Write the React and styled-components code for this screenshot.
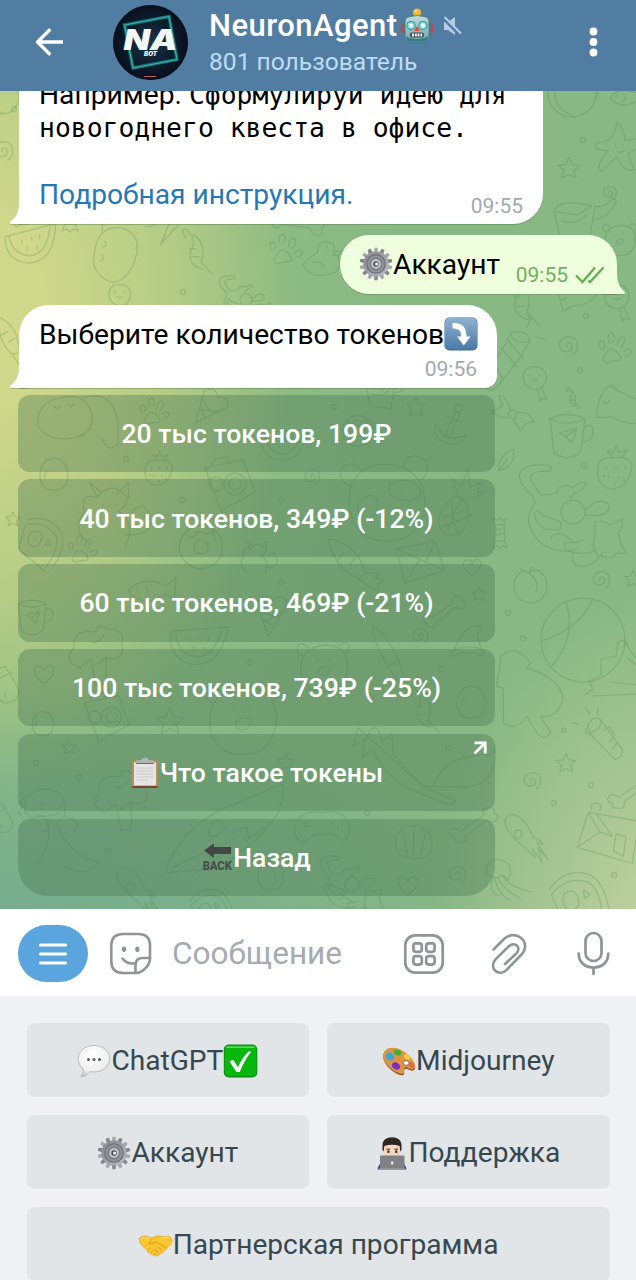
import React from 'react';
import styled, { createGlobalStyle } from 'styled-components';

const GlobalStyle = createGlobalStyle`
  * { box-sizing: border-box; }
  html, body { margin: 0; padding: 0; }
  body { font-family: Roboto, "Noto Sans", sans-serif; background: #eff1f5; overflow: hidden; }
  button { font: inherit; border: 0; padding: 0; margin: 0; background: none; color: inherit; }
  svg { display: block; flex: none; }
`;

const Screen = styled.div`
  width: 636px;
  height: 1280px;
  display: flex;
  flex-direction: column;
  overflow: hidden;
`;

/* ---------- header ---------- */
const Header = styled.header`
  height: 91px;
  flex: none;
  display: flex;
  align-items: flex-start;
  padding: 0 38px 0 34px;
  background: #527da3;
  color: #fff;
`;
const BackButton = styled.button`
  margin: 27px 49px 0 0;
`;
const Avatar = styled.div`
  width: 75px;
  height: 75px;
  margin: 5px 21px 0 0;
  border-radius: 50%;
  overflow: hidden;
  background: #0a1523;
`;
const Heading = styled.div`
  flex: 1;
  padding-top: 8px;
`;
const TitleRow = styled.div`
  display: flex;
  align-items: center;
  height: 36px;
`;
const Title = styled.h1`
  margin: 0 2px 0 0;
  font-size: 31px;
  line-height: 36px;
  font-weight: 500;
  letter-spacing: 0.45px;
  white-space: nowrap;
`;
const MuteIcon = styled.svg`
  margin-left: 9px;
`;
const Subtitle = styled.div`
  font-size: 24.6px;
  line-height: 36px;
  color: #bfdcf5;
  white-space: nowrap;
`;
const MenuDots = styled.button`
  margin-top: 27px;
`;

/* ---------- chat ---------- */
const Chat = styled.main`
  position: relative;
  height: 818px;
  flex: none;
  display: flex;
  flex-direction: column;
  justify-content: flex-end;
  padding: 0 19px 13px 18px;
  overflow: hidden;
  background:
    radial-gradient(ellipse 230px 350px at 104% 104%, rgba(202, 214, 165, 0.9), rgba(202, 214, 165, 0) 100%),
    radial-gradient(ellipse 520px 270px at 0% 106%, rgba(116, 171, 143, 1) 5%, rgba(116, 171, 143, 0) 100%),
    radial-gradient(ellipse 420px 640px at -3% 27%, #d0d88b 14%, rgba(192, 209, 134, 0.8) 45%, rgba(150, 192, 133, 0.3) 75%, rgba(136, 184, 132, 0) 100%),
    #88b884;
`;
const Wallpaper = styled.svg`
  position: absolute;
  inset: 0;
`;
const Bubble = styled.article`
  position: relative;
  flex: none;
  display: flex;
  flex-direction: column;
  width: ${(p) => p.$width}px;
  height: ${(p) => p.$height}px;
  align-self: ${(p) => (p.$out ? 'flex-end' : 'flex-start')};
  margin: 0 0 ${(p) => p.$gap}px ${(p) => (p.$out ? 0 : 1)}px;
  padding: ${(p) => p.$pad};
  background: ${(p) => (p.$out ? '#effedd' : '#fff')};
  border-radius: ${(p) => p.$radius};
  box-shadow: 0 1px 0 rgba(80, 120, 70, 0.42);
  font-size: 28.2px;
  line-height: 33.3px;
  color: #000;
`;
const Tail = styled.svg`
  position: absolute;
  bottom: -1px;
  ${(p) => (p.$out ? 'right: -9px;' : 'left: -10px;')}
`;
const Line = styled.div`
  display: flex;
  align-items: center;
  height: 33.3px;
  white-space: pre;
`;
const Mono = styled.span`
  font-family: "DejaVu Sans Mono", monospace;
  font-size: 26.4px;
`;
const Link = styled.a`
  color: #2678b6;
`;
const Stamp = styled.time`
  display: flex;
  align-self: flex-end;
  align-items: center;
  gap: 7px;
  margin-top: ${(p) => p.$drop}px;
  font-size: 21px;
  line-height: 24px;
  color: ${(p) => (p.$out ? '#70b15c' : '#a1aab3')};
`;
const FootRow = styled.div`
  display: flex;
  justify-content: space-between;
  align-items: flex-start;
`;

const InlineButtons = styled.div`
  position: relative;
  width: 477px;
  display: flex;
  flex-direction: column;
  gap: 7.4px;
`;
const InlineButton = styled.button`
  height: 77.4px;
  display: flex;
  position: relative;
  align-items: center;
  justify-content: center;
  border-radius: ${(p) => (p.$last ? '12px 12px 30px 30px' : '12px')};
  background: rgba(70, 115, 80, 0.36);
  color: #fff;
  font-size: 26.6px;
  font-weight: 500;
  white-space: nowrap;
`;
const Corner = styled.span`
  position: absolute;
  top: 7px;
  right: 8px;
`;

/* ---------- composer ---------- */
const Composer = styled.section`
  height: 87px;
  flex: none;
  display: flex;
  align-items: center;
  padding: 2px 26px 0 18px;
  background: #fff;
`;
const CommandsButton = styled.button`
  width: 70px;
  height: 57px;
  margin-right: 21px;
  display: flex;
  align-items: center;
  justify-content: center;
  border-radius: 29px;
  background: #5ba5df;
`;
const Placeholder = styled.span`
  flex: 1;
  margin-left: 20px;
  font-size: 31.6px;
  line-height: 36px;
  color: #a4abb1;
`;
const Tools = styled.div`
  display: flex;
  align-items: center;
`;
const ToolButton = styled.button`
  margin-left: ${(p) => p.$gap || 0}px;
`;

/* ---------- reply keyboard ---------- */
const Keyboard = styled.section`
  flex: none;
  display: grid;
  grid-template-columns: 1fr 1fr;
  gap: 18px;
  padding: 27px 26.4px 0 26.6px;
  background: #eff1f5;
`;
const Key = styled.button`
  height: 74px;
  grid-column: span ${(p) => p.$span || 1};
  display: flex;
  align-items: center;
  justify-content: center;
  border-radius: 7px;
  background: #e2e5e8;
  box-shadow: 0 1px 0 #f4f6f8;
  color: #36474f;
  font-size: 28.1px;
  padding-top: 1px;
  white-space: nowrap;
`;

/* ---------- emoji ---------- */
const Robot = () => (
  <svg width="34" height="36" viewBox="0 0 34 36">
    <defs>
      <linearGradient id="rb" x1="0" y1="0" x2="0" y2="1"><stop offset="0" stopColor="#c3dddd" /><stop offset="1" stopColor="#6fa3ab" /></linearGradient>
    </defs>
    <rect x="0.8" y="16" width="5" height="9" rx="2" fill="#d9433c" />
    <rect x="28.2" y="16" width="5" height="9" rx="2" fill="#d9433c" />
    <rect x="2.8" y="14" width="3" height="13" fill="#50777f" />
    <rect x="28.2" y="14" width="3" height="13" fill="#50777f" />
    <path d="M14 6h6v5h-6z" fill="#538691" />
    <circle cx="17" cy="4.5" r="4" fill="#efb62f" /><circle cx="16" cy="3.3" r="1.3" fill="#ffe58a" />
    <path d="M8 9q9-3 18 0 3 1 3 5v14q0 6-6 6H11q-6 0-6-6V14q0-4 3-5z" fill="url(#rb)" stroke="#477780" strokeWidth=".8" />
    <path d="M6 28q0 5.500 5 5.500h12q5 0 5-5.500-3 3-11 3T6 28z" fill="#2f7e86" />
    <circle cx="11" cy="17.5" r="4.600" fill="#2f8f9b" /><circle cx="23" cy="17.5" r="4.600" fill="#2f8f9b" />
    <circle cx="11" cy="17.5" r="3.6" fill="#7fe2e2" /><circle cx="23" cy="17.5" r="3.6" fill="#7fe2e2" />
    <circle cx="11" cy="17.5" r="2" fill="#fff" /><circle cx="23" cy="17.5" r="2" fill="#fff" />
    <path d="M17 18l3 5h-6z" fill="#e24840" />
    <rect x="10" y="24.500" width="14" height="5" rx="2" fill="#3c4d50" />
    <path d="M12 25.500h2v3h-2zM15 25.500h1.800v3H15zM17.600 25.500h1.800v3h-1.800zM20.400 25.500h1.800v3h-1.800z" fill="#f3f7f5" />
  </svg>
);

const Gear = () => (
  <svg width="34" height="34" viewBox="-17 -17 34 34">
    <defs><linearGradient id="gr" x1="0" y1="0" x2="1" y2="1"><stop offset="0" stopColor="#85868c" /><stop offset="1" stopColor="#b9bbc2" /></linearGradient></defs>
    {Array.from({ length: 14 }, (_, i) => (
      <path key={i} d="M-2.4-10L-1.5-16.3 1.6-16.3 2.4-10z" transform={`rotate(${(i * 360) / 14})`} fill={i % 2 ? '#85868d' : '#a6a8af'} />
    ))}
    <circle r="12.6" fill="url(#gr)" /><circle r="9.800" fill="#66676f" /><circle r="8.800" fill="#92949b" />
    <circle r="6.500" fill="#777981" /><circle r="5" fill="#c0c2c8" /><circle r="2.700" fill="#4b4c54" /><circle cx=".600" r="1.600" fill="#f3f4f5" />
  </svg>
);

const ArrowBox = () => (
  <svg width="34" height="34" viewBox="0 0 34 34">
    <defs><linearGradient id="ab" x1="0" y1="0" x2="0" y2="1"><stop offset="0" stopColor="#8fb1cf" /><stop offset="1" stopColor="#4b7ba8" /></linearGradient></defs>
    <rect x=".5" y=".5" width="33" height="33" rx="5" fill="#3f6b94" />
    <rect x="1" y=".8" width="32" height="31.6" rx="5" fill="url(#ab)" />
    <path d="M8.500 6C17 5.500 22.600 9 22.600 19.500h3.900L19.800 28.500 13 19.500h4.200C17.200 13.500 14.500 11.500 8.500 11.500z" fill="#fff" />
  </svg>
);

const Clipboard = () => (
  <svg width="30" height="32" viewBox="0 0 30 32">
    <rect x="2.300" y="3.500" width="25.400" height="27.500" rx="1" fill="#c98a58" />
    <rect x="2.300" y="29" width="25.400" height="2" fill="#7d4328" />
    <rect x="4" y="5.500" width="22" height="23" fill="#e6e4e5" />
    <path d="M6.500 11h17M6.500 14h17M6.500 17h17M6.500 20h17M6.500 23h11" stroke="#cbc9cc" strokeWidth="1.100" />
    <path d="M6 6.500V4.500q0-1.500 5-1.500 1-2.500 4-2.500t4 2.500q5 0 5 1.500v2z" fill="#aeb3b4" />
    <path d="M6 6.500h18" stroke="#6d6f70" strokeWidth="1" />
  </svg>
);

const BackArrow = () => (
  <svg width="31" height="30" viewBox="0 0 31 30">
    <path d="M2 8.500L12 1.200V5h17v7H12v4z" fill="#434846" />
    <text x="15.300" y="28.300" textAnchor="middle" textLength="29" lengthAdjust="spacingAndGlyphs" fontFamily="Roboto, sans-serif" fontWeight="700" fontSize="13.500" fill="#434846">BACK</text>
  </svg>
);

const Speech = () => (
  <svg width="34" height="34" viewBox="0 0 34 34">
    <defs><radialGradient id="sp" cx=".45" cy=".3" r=".75"><stop offset="0" stopColor="#fff" /><stop offset=".7" stopColor="#efefef" /><stop offset="1" stopColor="#bdbdbd" /></radialGradient></defs>
    <path d="M17 1.500c9 0 15.700 5.600 15.700 13.200S26 28 17 28c-1.500 0-3-.1-4.300-.5-2 3-5 5-9 5.500 2-2.200 3-5 2.300-8C3 22.500 1.200 19 1.200 14.700 1.200 7.100 8 1.500 17 1.500z" fill="url(#sp)" stroke="#b5b5b7" strokeWidth=".9" />
    <circle cx="11.500" cy="15.500" r="1.500" fill="#55585a" /><circle cx="17" cy="15.500" r="1.500" fill="#55585a" /><circle cx="22.500" cy="15.500" r="1.500" fill="#55585a" />
  </svg>
);

const Check = () => (
  <svg width="35" height="34" viewBox="0 0 35 34">
    <rect x=".8" y=".5" width="33.500" height="33" rx="5" fill="#0b8d15" />
    <rect x="1.800" y="1.500" width="31.500" height="30.500" rx="4" fill="#08b80d" />
    <path d="M4 3.300h27" stroke="#62d864" strokeWidth="1.400" strokeLinecap="round" />
    <path d="M6.500 17.500l3.600-1.800 5 7.600c2.500-6.500 6.500-12 11-16.300l2 .8c-4.500 5.700-8.500 12.700-11.300 20.200h-3.300z" fill="#fff" />
  </svg>
);

const Palette = () => (
  <svg width="34" height="34" viewBox="0 0 34 34">
    <path d="M2 9C5 3.500 14 3.500 21 8c7 4 12 11 12.300 16-1 3.500-4.600 3-6.800 1.500-2.500-1.500-5-.5-4.500 1.800.5 2 .4 4-2.500 4C11 30-2 18 2 9z" fill="#8f5a25" />
    <path d="M2 8C5 2.500 14 2.500 21 7c7 4 12 10.500 12.300 15.500-1 3.500-4.600 3-6.800 1.500-2.500-1.500-5-.5-4.500 1.800.5 2 .4 4-2.500 4C11 28.500-2 17 2 8z" fill="#dd9543" />
    <ellipse cx="24" cy="19" rx="3" ry="2.300" fill="#fafafa" stroke="#7f4f22" strokeWidth=".7" />
    <ellipse cx="8" cy="12.500" rx="3.700" ry="4.300" transform="rotate(-35 8 12.500)" fill="#38a8d8" />
    <ellipse cx="15.500" cy="8.500" rx="3.900" ry="2.700" transform="rotate(25 15.500 8.500)" fill="#45aa32" />
    <ellipse cx="25" cy="13" rx="3.400" ry="2.300" transform="rotate(35 25 13)" fill="#f1cf38" />
    <ellipse cx="29.500" cy="21" rx="2.300" ry="3.200" transform="rotate(-30 29.500 21)" fill="#e5634c" />
    <ellipse cx="14" cy="22" rx="4.200" ry="3.300" transform="rotate(35 14 22)" fill="#7a2cc0" />
  </svg>
);

const Technologist = () => (
  <svg width="32" height="34" viewBox="0 0 32 34">
    <path d="M1.500 33.500c1-6 5-9 14.500-9s13.500 3 14.500 9z" fill="#3d3da6" />
    <path d="M7.500 10h17v7c0 5-4 8-8.500 8s-8.500-3-8.500-8z" fill="#f5d5b9" />
    <path d="M6.500 14V9c0-5 4-7.800 9.500-7.800S25.500 4 25.500 9v5l-1.300 1.500-.5-5.500q-7.700-2.500-15.400 0l-.6 5.500z" fill="#302523" />
    <path d="M10.500 13.300h3.500M18.500 13.300H22" stroke="#352822" strokeWidth="1.100" />
    <circle cx="12.400" cy="15.700" r="1.300" fill="#3d2b23" /><circle cx="20.200" cy="15.700" r="1.300" fill="#3d2b23" />
    <rect x="4" y="19.500" width="24.500" height="14" rx="1" fill="#7f8184" />
    <path d="M3 33h26" stroke="#a0a1a5" strokeWidth="1.200" />
    <ellipse cx="16.200" cy="27" rx="1.300" ry="1.700" fill="#f0f0f0" />
  </svg>
);

const Handshake = () => (
  <svg width="35" height="26" viewBox="0 0 35 26">
    <path d="M1 6.500Q4 3 8 4l6 2Q18 3 22 4l5 .500q4-2 7 2.500c.6 3.500-1.500 6-4.500 8.500L25 20.500q-3 1.500-5 2.800-2.500 2-4-.3-3 .5-3.600-1.700-3 0-3.400-2.800L4.500 14Q1 11 1 6.500z" fill="#fbc52f" stroke="#e2a126" strokeWidth=".6" />
    <path d="M14.500 6.500l-3.500 4.800q2.500 1.700 5.500-1.300l3 .3 8.500 5.900" fill="none" stroke="#d9961c" strokeWidth="1" />
    <path d="M19.500 14.500l4.500 4M16.500 17l4 4M9.500 18.500l2.500-2.700M12.800 21l2.400-2.700M16.300 22.800l1.700-1.900" fill="none" stroke="#d9961c" strokeWidth="1" />
    <path d="M4 6.500q3-1.500 7-.300M23 5.800q4 .3 7-.8" fill="none" stroke="#ffe06a" strokeWidth="1.300" />
  </svg>
);

/* ---------- wallpaper ---------- */
const SHAPES = {
  star: 'M0-12L3.500-4 12-3 5.500 3 8 11 0 7-8 11-5.500 3-12-3-3.500-4z',
  spiral: 'M0 1C-2-3 4-5 5 0 6 6-4 8-7 2-10-6 0-12 7-8 12-4 12 5 6 9',
  dot: 'M2.500 0A2.500 2.500 0 1 1-2.500 0 2.500 2.500 0 1 1 2.500 0',
  heart: 'M0 10C-14 0-10-9-5-8-2-8 0-4 0-4S3-10 7-8C13-5 9 3 0 10z',
  anchor: 'M0-15a4 4 0 1 1 .1 0M-2-15l-1 28M3-15l-1 28M-8-7H8M-16 4q1 15 16 14 15 0 17-14l-7 5M-16 4l7 4M-10 8q9 9 20 0',
  egg: 'M0-18C12-18 16-3 13 6 9 17-9 17-13 6-16-3-12-18 0-18zM-6-6q-4 3-3 8',
  ball: 'M42 0A42 42 0 1 1-42 0 42 42 0 1 1 42 0M-17-38Q-6-2-32 27M-42 1Q-4-10 10-41',
  mug: 'M-17-14L-13 20Q3 30 14 18L18-14M-17-14Q0-23 18-14 0-6-17-14M17-6q10-5 9 6-1 9-11 9M-8 0L10-5 5 10-1 4zM-1 4l11-9',
  strawberry: 'M-15-8Q-20 14-3 18 15 18 18-6 14-16 0-13-11-15-15-8M-1-13l-6-8 7 3 2-7 3 7 8-3-5 8M-8-4v2M2-5v2M11-5v2M-5 5v2M5 5v2M-10 4v2M1 12v2M10 8v2',
  peach: 'M-2-12C-16-20-24 8-8 16 6 22 20 12 15-6 9-20-2-14-2-12Q9-4 5 7M-2-12l-9-4M-2-12l3-6',
  cat: 'M-28-16C-50-36-44-50-16-48-7-48-8-41-14-42-36-42-34-34-19-18M-19-18Q-12-18-4-20L-2-25Q6-30 11-25 20-32 25-30 24-24 14-20L9-15M-28-16l2 6Q-38 6-28 20-18 38 6 38L16 36M0-1a12 12 0 1 0 24 0 12 12 0 1 0-24 0M22-4Q30-3 31-9 39-15 48-9 50 0 38 2L24 2M-26 0Q-24-6-19 2L-3 8Q3 10-2 17L-16 16Q-28 8-26 0M34 9l7-1 8 4 12-6 0 8-4 6 3 11 5 9-9 0-6 5-14-3-4-9 2-10zM-10 25q4-7 15-2l9 7 8-3M12 30q-14-3-6 8l12 2q14 2 16-5M12 40q-3 16 14 13 13-6 16-14',
  fish: 'M-30 2Q-14-20 18-5L30-16 28 14 17 4Q-8 24-30 2M-19-3v3M-8 7q6-7 0-12',
  carrot: 'M-26-18Q2-20 18 8L11 14Q-13 10-26-18M-8-8l-4 8M4-5l-4 8M18 8q18-7 10 2 15 1 3 6 6 8-4 6l-16-8',
  cone: 'M-22-25L-5 24M22-25L-5 24M-22-25Q-12-42 0-28 12-40 22-25M-18-13L10-2M-13 0L5 10M18-13L-9 2',
  rays: 'M31-16L56 20M36 2L56 20M18 26L56 30M0 40L50 38M26-14l6-2 4 5M26-14l-2 14-15 3 0 16-12 6 4 8-8 6',
  icecream: 'M-22-26Q-17-47 6-36 20-34 20-18 37 0 17 12L10 27q-8 11-14-1l-2-11Q-19 17-22 8zM6-16v2M-7-20v2',
  popsicle: 'M-26-44Q-14-56 0-38L-4-34Q24-26 28-8 24 10 8 8L17 22Q12 30 6 24L-4 8Q-12 22-24 14L-24-16-30-18z',
  mitten: 'M-20-12l17-9 13 22q3 10-6 14-10 4-15-7l-9 0q-7-3-3-9zM-17-4L4-15M-9 0v4M-3 6v4',
  panda: 'M-34-4Q-33-40 3-41 44-38 42 3 36 37 2 36-32 34-34-4M-31-18q-17-8-9-20 13-8 19 5M20-37q2-17 19-10 12 7 0 22M-13-10q-14 5-12 18 7 14 17 1 8-15-5-19M10-23q-9 8 0 15 20 8 28-2-1-14-18-15zM-15 4v2M18-16v2',
  pineapple: 'M-12-15q-19 33 2 42 20 3 23-21 1-20-16-25zM-16 8L11-7M-13 18L16 0M-10-14q6 28 14 37M2-19Q-9 10-8 24M-3-19l-11-20 13 8 3-22 7 21 14-10-6 14 12-3-16 12',
  envelope: 'M-24-14L17-22 27 9-15 22zM-24-14L7 0 17-22M-15 22L1-3M27 9L7 0',
  hat: 'M-18 12Q-3-27 15-19 21-18 11-10L17 10M-21 12Q-2 1 20 10L18 17Q-2 9-21 18z',
  rocket: 'M-50 48Q-40 14 0-6 34-20 48-26 52-2 24 22L-2 44zM-12 8q10-8 12 2-8 12-14 6zM-44 44l30-14 4 10M4 16l14-6 2 10 14-10M-24 48l30-20',
  dino: 'M-24 38Q-5 14-17-10L-29-8Q-40-14-35-27-23-42-4-34 8-25 3-9L-5-4Q8 31 38 36 26 53 3 40M-18-24v4M-24-12q8 5 22-1M-36-28l-6 4 4 5-5 5 5 5M3-9q20 3 10 15M-18-10q12 14-1 16',
  camera: 'M-24-18L14-26 26 6-8 25zM-13-9a7 7 0 1 0 .1 0M6-13a11 11 0 1 0 .1 0M6-8a6 6 0 1 0 .1 0M-18-20l3-7 13-2 2 6',
  bear: 'M-32 14Q-39-25-5-32 31-37 34-2 30 35 0 34-22 36-32 14M-29-17q-13-4-8-15 8-7 14 4M21-28q4-13 14-5 5 7-5 14M-10-12v3M8-15v3M-7 2q7-7 14-2 1 10-8 10-8 0-6-8',
  squirrel: 'M-25 27q-21-17-6-36Q-36-31-17-25-1-46 17-25q0 11-11 15Q28 2 15 29M-16-25l-9-17 14 12M6-29L18-42 19-24M-10-18v3M4-18v3M15 16q37 2 25-26-8-12-18 2',
  fox: 'M-37-25Q-26-51-20-22L-10-31-8-9 22 24 34 25Q43-2 69-6L88-9Q97-7 99-17 103 30 54 25L34 25M22 24l32 14q7 4-4 6L6 26Q-21 9-30-15L-41-5-38-25-50-18-45-37z',
  shell: 'M-15 13q-8-20 2-24 3-8 10-4 8-5 12 3 9 1 8 10 4 9-5 17L0 17zM-7 13L-10-8M-1 14L0-14M6 14L11-8',
  squid: 'M-8 8Q-36-17-20-25-5-26 6 1L12 2 17 8 10 6 22 25 11 12 16 29 5 13 8 23zM-11-8a4 5 0 1 0 .1 0',
  jelly: 'M-12 0Q-12-17 4-14 17-9 10 6L5 1-2 4zM-3 4Q0 22 13 26M0 3Q2 13 23 25M5 2Q10 12 33 18M-5 4Q-10 18 1 22',
  carton: 'M-22-22L34-12 27 35-34 17zM-22-22L-9 0-34 17M-12-19L5 5-9 0M-18-25q-3-7 5-7 8 2 4 8M9 2l11 3-3 22-11-6z',
  pizza: 'M-29-2Q-12-26 14-17 31-7 34 25M-27 4Q-11-17 13-9 25 0 27 29M-27 4L-14 33H30M-14 12a8 8 0 1 0 15-4 8 8 0 1 0-15 4M7-1l7 5-6 4z',
  melon: 'M-26-8Q-30 16-8 22 18 26 26-12zM-22-8Q-22 10-6 15 12 18 20-10M-10-2v3M0-3v3M8-3v3M-6 6v3M4 7v3',
  candy: 'M-5-9L5-9 5 9-5 9zM-5-9L-8-16-3-14 0-17 3-14 7-16 5-9M-5 9l-3 7 5-2 3 3 3-3 5 2-3-7M-5-3L5-6M-5 3L5 0',
  flashlight: 'M-24-16q7-13 16-7L19 14q1 10-9 13L-22-6zM-24-16q-6 14 2 10 16-5 14-17M-5-10l8-4 7 10-6 8M13 6l-7 8M-35-17l-8-2M-22-30l-5-8M-12-30l1-8',
  starfish: 'M-22-8Q-5-6 0-31 9-25 9-10L29-13Q30-3 13 5L20 24Q8 29 0 9L-18 26Q-27 21-10 2-33 1-22-8M-2-5v2M7-5v2M1 3q4 2 7-1',
  paw: 'M-8 7Q-2-5 7 5 14 14 4 13L-6 15Q-13 12-8 7M-12 0q-6-8 1-9 5 3 1 9M-3-7q-4-10 3-11 5 5 0 11M6-4q1-11 7-9 3 5-3 11M13 3q6-6 8-1 0 6-7 6',
  bow: 'M-5-3Q-17-18-23-13L-15-4-24 6Q-9 11-4 4L1 6 14 15 16 6 24 0 14-6 1-3zM-5-3Q-9 5-4 4M1-3Q6 3 1 6',
  whale: 'M-32 23Q-29-7-18-12L2-2Q22 9 38 4L28 26Q4 34-14 22zM-25 5q6 4 8-1M-18-12Q-12-16-8-6',
  cracker: 'M-29 17Q-13-2-3-24 12-29 16-16 1 10-20 33-31 35-29 17M-3-24q2 13 19 8M-21 4l10 18M-13-9L3 10M-7-18L9 1M13-30l4-8-4-4M21-20l10 2',
  duck: 'M-29 7Q-14-7-4-13-4-31 12-31 28-27 23-13 40 2 26 20-14 36-29 7M12-23v3M23-15l14 0-7 8-9-1M-12 4q12-4 19 8',
  chick: 'M-14-4Q-14-17 0-17 15-15 13-2 11 9 0 10-13 8-14-4M8 8l6 14-5-2-3 4-3-15M-6-8v2M5-8v2M-4-2q4 3 7 0',
  pencil: 'M-12 34L-4-2Q8-34 18-40 20-24 8 2zM-4-2L8 2M-12 34l3-10',
  basket: 'M-28-4Q-24-17 0-14L16-11-1 0zM-28-4L-21 27 13 31 20-10M20-10q13 2 20-10l5 3q-9 21-25 22M-19 7Q0 12 10 0',
  tree: 'M-5-20Q-31-24-29-2-42 10-23 20L-10 10-5 39 7 38 7 9Q29 13 24-8 31-21 7-24-2-32-5-20M-5 17l12-9M-10-9q10 2 14-8',
  bone: 'M-14 7L9-9q-3-8 4-7 8-2 6 5 8 3 1 8-4 2-8-1L-9 12q1 8-6 6-7 1-5-5-8-1-4-7 4-3 10 1',
  worm: 'M-18-18q-7-9 0-10 11 10 8 19-10 20 11 26M-10-22Q6-11-1 9L11 22M-14-6h7M-11 3h8',
  donut: 'M24 0A24 24 0 1 1-24 0 24 24 0 1 1 24 0M8 0A8 8 0 1 1-8 0 8 8 0 1 1 8 0M-19-14l10 4 6-8 8 4 8-3 3 10',
  orange: 'M24-4A24 24 0 1 1-24-4 24 24 0 1 1 24-4M-14-20Q-26 10 4 20M-8-26Q8-38 24-22 30-10 24 2',
  gamepad: 'M-28-8Q-20-20 0-17 22-22 29-6 34 12 22 14L12 6-10 8-20 16Q-34 14-28-8M-18-6v9M-22-2h9M12-6v2M18-2v2M8 0v2',
  sleeper: 'M-36 8Q-38-16-14-20 12-26 18-4 20 16 0 20-26 24-36 8M-20-12q2 5 6 0M-6-14q2 5 6 0M8-20Q40-30 44 6L44 26Q34 36 28 20',
  leaf: 'M-8 12Q-10-4 8-12 12 6-8 12L2-2',
};

const DOODLES = [
  ['dot', 14, 109, 1], ['spiral', 2, 151, 1], ['orange', 2, 100, 0.7],
  ['melon', 32, 240, 1, -10], ['dot', 17, 224, 1], ['candy', 70, 215, 1], ['sleeper', 118, 246, 1, -70], ['pencil', 180, 210, 1.1, 10],
  ['star', 243, 212, 1.1], ['bone', 298, 222, 1.1, 45], ['worm', 202, 254, 0.9], ['paw', 283, 250, 0.9], ['duck', 320, 260, 0.6],
  ['dot', 183, 292, 1], ['cat', 240, 300, 0.5], ['carrot', 10, 340, 0.8, 30], ['chick', 120, 298, 0.8],
  ['orange', 572, 97, 1], ['starfish', 617, 149, 0.85], ['star', 569, 168, 0.9], ['dot', 583, 140, 1], ['spiral', 609, 193, 0.7],
  ['fish', 628, 97, 0.6], ['basket', 578, 215, 0.85], ['bear', 620, 240, 0.45], ['worm', 528, 303, 1], ['cracker', 514, 357, 1],
  ['whale', 574, 290, 0.6, -28], ['chick', 617, 300, 0.9], ['dot', 586, 316, 1], ['spiral', 567, 346, 1], ['paw', 612, 349, 0.9],
  ['chick', 535, 381, 0.85], ['dot', 580, 370, 1], ['whale', 625, 397, 0.9], ['bow', 514, 414, 0.9, 20], ['mug', 567, 433, 1],
  ['worm', 575, 399, 0.4], ['strawberry', 614, 471, 1], ['leaf', 506, 460, 0.9], ['dot', 584, 465, 1], ['cat', 561, 513, 1],
  ['candy', 500, 533, 0.9], ['peach', 531, 585, 1], ['spiral', 600, 580, 0.9], ['star', 633, 579, 0.7], ['ball', 583, 640, 1], ['dot', 508, 613, 1],
  ['dot', 523, 638, 1], ['popsicle', 531, 707, 1.15], ['rays', 592, 656, 1], ['flashlight', 607, 738, 0.8],
  ['star', 566, 763, 0.8], ['spiral', 531, 781, 0.9], ['dot', 591, 785, 1], ['dot', 554, 803, 1], ['dot', 564, 730, 0.8],
  ['bone', 633, 790, 1], ['squid', 528, 837, 0.9], ['carton', 608, 832, 0.9], ['pizza', 577, 891, 0.95], ['dot', 614, 875, 1],
  ['sleeper', 74, 418, 1], ['paw', 152, 412, 0.8], ['cone', 207, 412, 0.65, 35], ['melon', 285, 440, 0.9],
  ['dot', 126, 459, 1], ['dot', 334, 407, 1], ['basket', 383, 390, 0.6], ['star', 416, 407, 0.8], ['anchor', 452, 426, 1, 20],
  ['donut', 358, 431, 0.65], ['egg', 54, 476, 1], ['strawberry', 158, 471, 0.8],
  ['camera', 229, 486, 1], ['spiral', 311, 477, 0.8], ['panda', 383, 505, 1], ['pineapple', 458, 513, 0.85, 10], ['dot', 182, 500, 1],
  ['star', 13, 519, 0.6], ['pizza', 44, 536, 0.8, 40], ['donut', 201, 547, 0.9], ['squirrel', 258, 560, 0.45], ['carrot', 350, 562, 1, 12],
  ['squirrel', 112, 520, 0.9], ['dot', 281, 500, 1], ['paw', 80, 550, 0.8],
  ['envelope', 419, 562, 0.95], ['heart', 472, 567, 0.9], ['star', 479, 594, 0.6], ['fish', 152, 590, 0.8],
  ['melon', 200, 640, 1.1], ['dot', 281, 582, 1], ['bone', 445, 611, 0.9], ['spiral', 419, 636, 0.8], ['cone', 272, 620, 0.7],
  ['hat', 468, 642, 0.8], ['tree', 100, 650, 0.9], ['mug', 32, 615, 0.8],
  ['dot', 250, 662, 1], ['bear', 324, 668, 0.7], ['pencil', 392, 665, 1, -50], ['dot', 441, 669, 1], ['egg', 471, 704, 1],
  ['heart', 44, 674, 1], ['mitten', 8, 687, 1], ['egg', 43, 725, 0.75], ['camera', 106, 719, 0.9], ['star', 170, 721, 1.1],
  ['bear', 243, 720, 1], ['worm', 429, 712, 0.9], ['star', 69, 747, 0.6], ['dot', 36, 763, 1], ['dot', 79, 777, 1],
  ['tree', 125, 795, 0.9], ['rocket', 225, 815, 1.2], ['fox', 401, 763, 0.95], ['dot', 448, 748, 1],
  ['bone', 475, 824, 1], ['mitten', 4, 820, 0.8], ['dino', 61, 826, 1], ['dot', 142, 759, 1], ['shell', 414, 842, 1],
  ['gamepad', 322, 828, 0.9], ['spiral', 456, 875, 0.9], ['heart', 408, 885, 1], ['jelly', 498, 874, 1], ['dot', 367, 813, 1],
  ['dot', 108, 851, 1], ['squid', 140, 890, 0.9], ['peach', 271, 876, 0.8], ['cat', 345, 885, 0.6],
  ['pizza', 210, 903, 0.7], ['star', 286, 762, 0.7],
];

const Doodles = () => (
  <Wallpaper width="636" height="818" viewBox="0 91 636 818" aria-hidden="true">
    <g fill="none" stroke="#4d8653" strokeOpacity=".27" strokeLinejoin="round" strokeLinecap="round">
      {DOODLES.map(([kind, x, y, s, r = 0], i) => (
        <path key={i} d={SHAPES[kind]} strokeWidth={1.25 / s} transform={`translate(${x} ${y}) rotate(${r}) scale(${s})`} />
      ))}
    </g>
  </Wallpaper>
);

const TailIn = () => (
  <Tail width="20" height="31" viewBox="0 0 20 31">
    <path d="M10 0V12Q9.500 23 1.500 27.500Q-1 29.500 2 30.800H20V0z" fill="rgba(80,120,70,.42)" />
    <path d="M10 0V11Q9.500 22 1.500 27.500Q-1 29.500 2 30H20V0z" fill="#fff" />
  </Tail>
);
const TailOut = () => (
  <Tail $out width="20" height="31" viewBox="0 0 20 31">
    <path d="M11 0V10Q11 23 18.500 28Q20.500 30 18 30.800H0V0z" fill="rgba(80,120,70,.42)" />
    <path d="M11 0V9Q11 22 18.500 27.800Q20.500 29.500 18 30H0V0z" fill="#effedd" />
  </Tail>
);

const KEYS = [
  { label: 'ChatGPT', before: Speech, after: Check },
  { label: 'Midjourney', before: Palette },
  { label: 'Аккаунт', before: Gear },
  { label: 'Поддержка', before: Technologist },
  { label: 'Партнерская программа', before: Handshake, span: 2 },
];

const OPTIONS = [
  { label: '20 тыс токенов, 199₽' },
  { label: '40 тыс токенов, 349₽ (-12%)' },
  { label: '60 тыс токенов, 469₽ (-21%)' },
  { label: '100 тыс токенов, 739₽ (-25%)' },
  { label: 'Что такое токены', icon: Clipboard, link: true },
  { label: 'Назад', icon: BackArrow },
];

export default function App() {
  return (
    <Screen>
      <GlobalStyle />
      <Header>
        <BackButton aria-label="Назад">
          <svg width="30" height="30" viewBox="0 0 30 30" fill="none" stroke="#fff" strokeWidth="3.400" strokeLinejoin="round">
            <path d="M29 15H4M16.300 2.300L3.500 15l12.800 12.700" />
          </svg>
        </BackButton>
        <Avatar>
          <svg width="75" height="75" viewBox="0 0 75 75">
            <defs><radialGradient id="av"><stop offset="0" stopColor="#183447" /><stop offset="1" stopColor="#080f1d" /></radialGradient></defs>
            <circle cx="37.500" cy="37.500" r="37.500" fill="url(#av)" />
            <path d="M11.500 20L56 11.500 64 54.500 20 63z" fill="none" stroke="#17686e" strokeWidth="3.400" />
            <path d="M11.500 20L56 11.500 64 54.500 20 63z" fill="none" stroke="#36b3ac" strokeWidth="1.200" />
            <text x="37.500" y="45" textAnchor="middle" textLength="54" lengthAdjust="spacingAndGlyphs" fontFamily="Inter, sans-serif" fontWeight="900" fontStyle="italic" fontSize="28" fill="#f2f7f8">NA</text>
            <text x="37.500" y="51" textAnchor="middle" textLength="13" lengthAdjust="spacingAndGlyphs" fontFamily="Inter, sans-serif" fontWeight="900" fontStyle="italic" fontSize="5.500" fill="#f2f7f8">BOT</text>
            <path d="M31 71.500h12" stroke="#c05b68" strokeWidth="1" />
          </svg>
        </Avatar>
        <Heading>
          <TitleRow>
            <Title>NeuronAgent</Title>
            <Robot />
            <MuteIcon width="20" height="20" viewBox="0 0 20 20">
              <path d="M1 6h4l7-5v18l-7-5H1z" fill="#b3cee5" />
              <path d="M0 1.500l17 17" stroke="#527da3" strokeWidth="4" />
              <path d="M1.500 1L18 17.500" stroke="#b3cee5" strokeWidth="2" />
            </MuteIcon>
          </TitleRow>
          <Subtitle>801 пользователь</Subtitle>
        </Heading>
        <MenuDots aria-label="Меню">
          <svg width="9" height="30" viewBox="0 0 9 30" fill="#fff">
            <circle cx="4.500" cy="4.500" r="3.900" /><circle cx="4.500" cy="15" r="3.900" /><circle cx="4.500" cy="25.500" r="3.900" />
          </svg>
        </MenuDots>
      </Header>

      <Chat>
        <Doodles />
        <Bubble $width={524} $height={166} $gap={11} $pad="20px 20px 0 20px" $radius="30px 30px 30px 0">
          <Line>Например. <Mono>Сформулируй идею для</Mono></Line>
          <Line><Mono>новогоднего квеста в офисе.</Mono></Line>
          <Line />
          <FootRow>
            <Line><Link>Подробная инструкция.</Link></Line>
            <Stamp $drop={16}>09:55</Stamp>
          </FootRow>
          <TailIn />
        </Bubble>

        <Bubble $out $width={277} $height={59} $gap={11} $pad="13px 12px 0 19px" $radius="29px 29px 0 29px">
          <FootRow>
            <Line><Gear />Аккаунт</Line>
            <Stamp $out $drop={15}>
              09:55
              <svg width="30" height="18" viewBox="0 0 30 18" fill="none" stroke="#5fb04f" strokeWidth="2.300">
                <path d="M1 9.500l6.500 6.500L20 1.500M13.500 14.500l1.500 1.500L28.500 1.500" />
              </svg>
            </Stamp>
          </FootRow>
          <TailOut />
        </Bubble>

        <Bubble $width={478} $height={83} $gap={7} $pad="13px 20px 0 20px" $radius="30px 30px 12px 0">
          <Line>Выберите количество токенов<ArrowBox /></Line>
          <Stamp $drop={6}>09:56</Stamp>
          <TailIn />
        </Bubble>

        <InlineButtons>
          {OPTIONS.map(({ label, icon: Icon, link }, i) => (
            <InlineButton key={label} $last={i === OPTIONS.length - 1}>
              {Icon && <Icon />}
              {label}
              {link && (
                <Corner>
                  <svg width="14" height="14" viewBox="0 0 14 14" fill="none" stroke="#fff" strokeWidth="2.800">
                    <path d="M1.500 1.800h10.700v10.700M12 2L1.500 12.500" />
                  </svg>
                </Corner>
              )}
            </InlineButton>
          ))}
        </InlineButtons>
      </Chat>

      <Composer>
        <CommandsButton aria-label="Команды">
          <svg width="30" height="24" viewBox="0 0 30 24" stroke="#fff" strokeWidth="3.200" strokeLinecap="round">
            <path d="M2.500 3h25M2.500 12h25M2.500 21h25" />
          </svg>
        </CommandsButton>
        <svg width="43" height="43" viewBox="0 0 43 43" fill="none" stroke="#8e9599" strokeWidth="2.600" strokeLinecap="round" strokeLinejoin="round">
          <path d="M26.500 41H14Q2.300 41 2.300 29.300V13.700Q2.300 2 14 2h15Q41 2 41 13.700V26.500C41 33 34 41 26.500 41z" />
          <path d="M26.500 41V33q0-7 7.500-7h7" />
          <path d="M13.500 26.500q4.500 6 12.500 4.800" />
          <ellipse cx="15" cy="17.300" rx="2.100" ry="2.800" fill="#8e9599" stroke="none" />
          <ellipse cx="28.300" cy="17.300" rx="2.100" ry="2.800" fill="#8e9599" stroke="none" />
        </svg>
        <Placeholder>Сообщение</Placeholder>
        <Tools>
          <ToolButton aria-label="Клавиатура">
            <svg width="42" height="42" viewBox="0 0 42 42" fill="none" stroke="#8e9599" strokeWidth="2.700">
              <rect x="2.300" y="2.300" width="37.400" height="37.400" rx="10" />
              <rect x="10.400" y="10.400" width="8.400" height="8.400" rx="2.500" /><rect x="23.200" y="10.400" width="8.400" height="8.400" rx="2.500" />
              <rect x="10.400" y="23.200" width="8.400" height="8.400" rx="2.500" /><rect x="23.200" y="23.200" width="8.400" height="8.400" rx="2.500" />
            </svg>
          </ToolButton>
          <ToolButton $gap={46} aria-label="Прикрепить">
            <svg width="36" height="42" viewBox="0 0 36 42" fill="none" stroke="#8e9599" strokeWidth="2.600" strokeLinecap="round">
              <path d="M2.500 16.500L13 6C17 1.800 24 .5 29.500 4.500c5.500 4 6 11.500 1.500 16.500L16 36.500c-3.500 4-9 4.200-12 1-3-3.300-2.500-8 .8-11.300L17.500 13.500c2.500-2.500 6.300-3 8.500-.8 2.200 2.300 1.500 5.500-.7 7.800L14 31" />
            </svg>
          </ToolButton>
          <ToolButton $gap={50} aria-label="Голосовое сообщение">
            <svg width="33" height="45" viewBox="0 0 33 45" fill="none" stroke="#8e9599" strokeWidth="2.700" strokeLinecap="round">
              <rect x="8.500" y="2" width="16" height="28" rx="8" />
              <path d="M1.700 22.500c0 9 6.500 14 14.800 14s14.800-5 14.800-14M16.500 37v6" />
            </svg>
          </ToolButton>
        </Tools>
      </Composer>

      <Keyboard>
        {KEYS.map(({ label, before: Before, after: After, span }) => (
          <Key key={label} $span={span}>
            <Before />
            {label}
            {After && <After />}
          </Key>
        ))}
      </Keyboard>
    </Screen>
  );
}
